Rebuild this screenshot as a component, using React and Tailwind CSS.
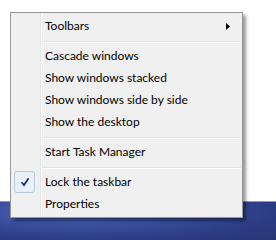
const items = [
  { type: 'item', label: 'Toolbars', submenu: true },
  { type: 'sep' },
  { type: 'item', label: 'Cascade windows' },
  { type: 'item', label: 'Show windows stacked' },
  { type: 'item', label: 'Show windows side by side' },
  { type: 'item', label: 'Show the desktop' },
  { type: 'sep' },
  { type: 'item', label: 'Start Task Manager' },
  { type: 'sep' },
  { type: 'item', label: 'Lock the taskbar', checked: true },
  { type: 'item', label: 'Properties' },
];

function CheckBox() {
  return (
    <div className="flex h-[22px] w-[21px] items-center justify-center rounded-[3px] border border-[#b6c8e2] bg-[#eaf0f8]">
      <svg width="10" height="10" viewBox="0 0 10 10">
        <path d="M1.5 5.2 L4 8 L8.6 1.2" fill="none" stroke="#1d2c7e" strokeWidth="1.7" />
      </svg>
    </div>
  );
}

function MenuItem({ item }) {
  return (
    <div className="flex h-[22px] items-center">
      <div className="flex w-[29px] shrink-0 items-center pl-[3px]">
        {item.checked && <CheckBox />}
      </div>
      <div className="w-[2px] shrink-0 self-stretch" />
      <span className="flex-1 pl-[3px]">{item.label}</span>
      {item.submenu && (
        <svg width="4" height="7" viewBox="0 0 4 7" className="mr-[12px]">
          <path d="M0 0 L4 3.5 L0 7 Z" fill="#000" />
        </svg>
      )}
    </div>
  );
}

function Separator() {
  return (
    <div className="flex h-[8px]">
      <div className="w-[31px] shrink-0" />
      <div className="mt-[4px] flex-1 pr-[1px]">
        <div className="h-px bg-[#e0e0e0]" />
        <div className="h-px bg-white" />
      </div>
    </div>
  );
}

export default function App() {
  return (
    <div className="relative flex h-[240px] w-[276px] flex-col overflow-hidden bg-white font-['Lato',sans-serif] text-[12px] leading-none text-black">
      <div className="h-[201px]" />
      <div className="h-[39px] border-t border-[#8e97bb] bg-[radial-gradient(ellipse_at_28%_25%,#5166b8_0%,#3b4f9f_35%,#2c3c84_70%,#283672_100%)]" />

      <div className="absolute left-[10px] top-[12px] w-[233px] border border-[#979797] bg-[#f0f0f0] pb-[2px] pt-[2px] shadow-[3px_3px_3px_rgba(0,0,0,0.4)]">
        <div className="pointer-events-none absolute bottom-0 left-[29px] top-0 w-[2px] border-l border-[#e2e3e3] border-r border-r-white" />
        <div className="relative">
          {items.map((item, i) =>
            item.type === 'sep' ? <Separator key={i} /> : <MenuItem key={i} item={item} />
          )}
        </div>
      </div>
    </div>
  );
}
